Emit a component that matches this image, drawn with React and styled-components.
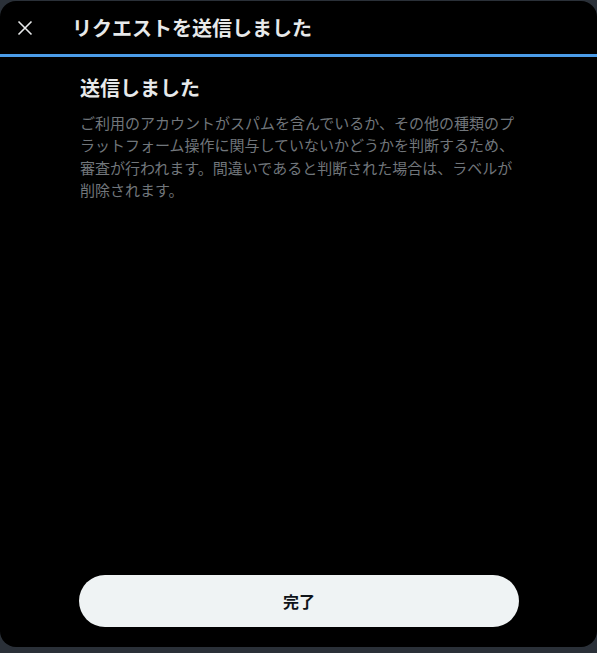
import React from "react";
import styled, { createGlobalStyle } from "styled-components";

const Global = createGlobalStyle`
  html, body { margin: 0; padding: 0; background: #2a3038; }
  body { font-family: "Noto Sans CJK JP", "Noto Sans", sans-serif; }
  * { box-sizing: border-box; }
`;

const Page = styled.div`
  width: 597px;
  height: 653px;
  padding-top: 1px;
  overflow: hidden;
  background: #2a3038;
`;

const Modal = styled.div`
  width: 597px;
  height: 646px;
  background: #000;
  border-radius: 16px;
  overflow: hidden;
  display: flex;
  flex-direction: column;
`;

const Header = styled.div`
  height: 53px;
  display: flex;
  align-items: center;
  padding-left: 14px;
  gap: 36px;
  flex-shrink: 0;
`;

const CloseButton = styled.button`
  width: 22px;
  height: 22px;
  padding: 0;
  border: none;
  background: transparent;
  color: #e7e9ea;
  display: flex;
  align-items: center;
  justify-content: center;
  cursor: pointer;
  svg { width: 22px; height: 22px; }
`;

const Title = styled.h1`
  margin: 0;
  font-size: 20px;
  font-weight: 700;
  color: #e7e9ea;
  line-height: 24px;
`;

const Progress = styled.div`
  height: 3px;
  background: #4b9ce8;
  flex-shrink: 0;
`;

const Content = styled.div`
  flex: 1;
  display: flex;
  flex-direction: column;
  padding: 19px 80px 20px 80px;
`;

const Heading = styled.h2`
  margin: 0;
  font-size: 20px;
  font-weight: 700;
  line-height: 24px;
  color: #e7e9ea;
`;

const Body = styled.p`
  margin: 12px 0 0;
  font-size: 15px;
  line-height: 22.3px;
  color: #71767b;
  width: 440px;
`;

const Spacer = styled.div`
  flex: 1;
`;

const DoneButton = styled.button`
  width: 440px;
  height: 52px;
  margin-left: -1px;
  border: none;
  border-radius: 26px;
  background: #eff3f4;
  color: #0f1419;
  font-family: inherit;
  font-size: 16px;
  font-weight: 700;
  cursor: pointer;
`;

export default function App() {
  return (
    <>
      <Global />
      <Page>
        <Modal>
          <Header>
            <CloseButton aria-label="閉じる">
              <svg viewBox="0 0 22 22" fill="none" stroke="currentColor" strokeWidth="1.6" strokeLinecap="butt">
                <path d="M4.5 4.5L17.5 17.5M17.5 4.5L4.5 17.5" />
              </svg>
            </CloseButton>
            <Title>リクエストを送信しました</Title>
          </Header>
          <Progress />
          <Content>
            <Heading>送信しました</Heading>
            <Body>
              ご利用のアカウントがスパムを含んでいるか、その他の種類のプラットフォーム操作に関与していないかどうかを判断するため、審査が行われます。間違いであると判断された場合は、ラベルが削除されます。
            </Body>
            <Spacer />
            <DoneButton>完了</DoneButton>
          </Content>
        </Modal>
      </Page>
    </>
  );
}
